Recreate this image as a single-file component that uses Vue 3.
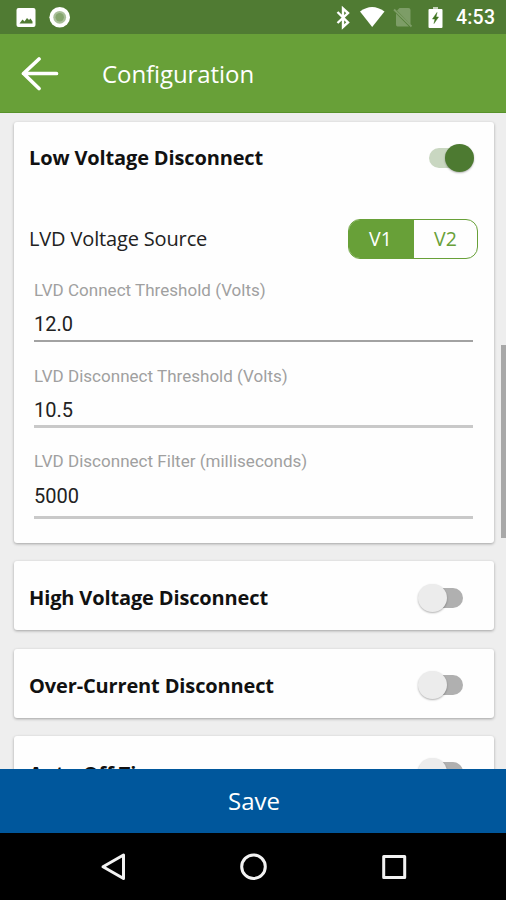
<script setup>
import { ref } from 'vue'

const lowVoltage = ref(true)
const source = ref('V1')
const fields = ref([
  { label: 'LVD Connect Threshold (Volts)', value: '12.0', key: 'connect' },
  { label: 'LVD Disconnect Threshold (Volts)', value: '10.5', key: 'disconnect' },
  { label: 'LVD Disconnect Filter (milliseconds)', value: '5000', key: 'filter' },
])
const sections = ref([
  { title: 'High Voltage Disconnect', key: 'high', on: false },
  { title: 'Over-Current Disconnect', key: 'over', on: false },
  { title: 'Auto-Off Timer', key: 'auto', on: false },
])
</script>

<template>
  <div class="screen">
    <div class="status">
      <svg class="status-left" width="60" height="34" viewBox="0 0 60 34">
        <path fill="#fff" fill-rule="evenodd" d="M3.500 8h15q2 0 2 2v15q0 2-2 2h-15q-2 0-2-2V10q0-2 2-2zM4.500 23.500h13v-2l-2-3-1.500 1.500-2-2-2.500 3.500-2-2z" />
        <circle cx="44.700" cy="17.300" r="10.300" fill="#fff" />
        <circle cx="44.700" cy="17.300" r="6.400" fill="#a9bf99" />
        <circle cx="44.700" cy="17.300" r="4.200" fill="#86a66f" />
      </svg>
      <svg class="status-right" width="112" height="34" viewBox="0 0 112 34">
        <path d="M1.500 12l10.500 10.500-5 4.500V8.500L12 13 1.500 23" fill="none" stroke="#fff" stroke-width="2.400" />
        <path d="M24 11.500Q36 2.500 48.500 11.500L36.200 27z" fill="#fff" />
        <path d="M63.500 8h9q2 0 2 2v14.500L61 10.500zM60 13.500L73 26.500H61.500q-1.500 0-1.500-2z" fill="#7d9d67" />
        <path d="M58 9.500l17.500 17" stroke="#7d9d67" stroke-width="1.800" />
        <path d="M97 7h5v2h-5z" fill="#c5d3bb" />
        <path d="M93.500 9h12q1 0 1 1v17q0 1-1 1h-12q-1 0-1-1V10q0-1 1-1z" fill="#fff" />
        <path d="M101 12.500l-4.500 6.500h2.500l-1 4.500 4.500-6.500h-2.500z" fill="#3f7420" stroke="#3f7420" stroke-width="0.500" />
      </svg>
      <span class="clock">4:53</span>
    </div>

    <header class="appbar">
      <svg width="40" height="36" viewBox="0 0 40 36" fill="none" stroke="#fff" stroke-width="3.700" stroke-linecap="round" stroke-linejoin="round">
        <path d="M19 4L3.500 18.500l15.500 15M3.500 18.500h33" />
      </svg>
      <h1>Configuration</h1>
    </header>

    <main class="content">
      <section class="card main-card">
        <div class="row">
          <h2 class="low">Low Voltage Disconnect</h2>
          <button class="switch" :class="{ on: lowVoltage }" @click="lowVoltage = !lowVoltage"></button>
        </div>
        <div class="source-row">
          <span class="source-label">LVD Voltage Source</span>
          <div class="segments">
            <button v-for="s in ['V1', 'V2']" :key="s" :class="{ active: source === s }" @click="source = s">{{ s }}</button>
          </div>
        </div>
        <div v-for="f in fields" :key="f.key" class="field" :class="f.key">
          <label :for="f.key">{{ f.label }}</label>
          <input :id="f.key" v-model="f.value" />
        </div>
      </section>
      <section v-for="s in sections" :key="s.key" class="card">
        <div class="row">
          <h2 :class="s.key">{{ s.title }}</h2>
          <button class="switch" :class="{ on: s.on }" @click="s.on = !s.on"></button>
        </div>
      </section>
      <div class="scrollbar"></div>
    </main>

    <button class="save">Save</button>
    <nav class="nav">
      <svg width="506" height="67" viewBox="0 0 506 67" fill="none" stroke="#f2f2f2" stroke-width="3" stroke-linejoin="round">
        <path d="M123.500 22v23.500L103 33.700z" />
        <circle cx="253.500" cy="33.700" r="11.800" />
        <rect x="383.700" y="23.500" width="21" height="21" />
      </svg>
    </nav>
  </div>
</template>

<style>
body {
  margin: 0;
  overflow: hidden;
}
</style>

<style scoped>
* {
  box-sizing: border-box;
}
button, input {
  font: inherit;
  border: 0;
  padding: 0;
  margin: 0;
  background: none;
}
.screen {
  width: 506px;
  height: 900px;
  display: flex;
  flex-direction: column;
  overflow: hidden;
  background: #eee;
  font-family: "Open Sans", sans-serif;
}
.status {
  height: 34px;
  flex: none;
  display: flex;
  align-items: center;
  padding: 0 11px 0 15px;
  background: #507b33;
}
.status-right {
  margin-left: auto;
}
.clock {
  width: 39px;
  margin-left: 8px;
  padding-top: 2px;
  color: #fff;
  font: 500 19.500px/22px Roboto, sans-serif;
  letter-spacing: 0.200px;
  white-space: nowrap;
}
.appbar {
  height: 79px;
  flex: none;
  display: flex;
  align-items: center;
  padding-left: 20px;
  background: #68a038;
  border-bottom: 1px solid #57922a;
}
h1 {
  margin: 1px 0 0 42px;
  color: #fff;
  font-size: 24px;
  font-weight: 400;
  line-height: 32px;
  letter-spacing: -0.080px;
}
.content {
  position: relative;
  height: 655.500px;
  flex: none;
  overflow: hidden;
  padding: 9px 12px 0 14px;
  display: flex;
  flex-direction: column;
  gap: 18.300px;
}
.card {
  flex: none;
  height: 69px;
  background: #fefefe;
  border-radius: 3px;
  box-shadow: 0 1px 3px rgba(0, 0, 0, 0.32);
}
.main-card {
  height: 421px;
}
.row {
  height: 72px;
  display: flex;
  align-items: center;
  justify-content: space-between;
  padding: 0 20px 0 15px;
}
.card:not(.main-card) .row {
  height: 73px;
  padding-right: 30px;
}
h2 {
  margin: 0;
  color: #111;
  font-size: 20px;
  font-weight: 700;
  line-height: 28px;
  letter-spacing: -0.140px;
  white-space: nowrap;
}
h2.over {
  margin-top: 1px;
}
h2.auto {
  margin-top: 4px;
}
.switch {
  width: 46px;
  height: 28px;
  display: flex;
  align-items: center;
}
.switch::before {
  content: "";
  width: 29px;
  height: 28px;
  flex: none;
  border-radius: 50%;
  background: #ececec;
  box-shadow: 0 1px 2px rgba(0, 0, 0, 0.3);
  z-index: 1;
}
.switch::after {
  content: "";
  width: 34px;
  height: 20px;
  flex: none;
  margin-left: -18px;
  border-radius: 10px;
  background: #b0b0b0;
}
.switch.on {
  flex-direction: row-reverse;
}
.switch.on::before {
  background: #4d7a31;
}
.switch.on::after {
  margin: 0 -18px 0 0;
  background: #c9d7c1;
}
.source-row {
  height: 41px;
  margin-top: 24px;
  margin-bottom: 1px;
  padding: 0 16px 0 15px;
  display: flex;
  align-items: center;
  justify-content: space-between;
}
.source-label {
  color: #222;
  font-size: 20px;
  line-height: 28px;
  letter-spacing: -0.150px;
}
.segments {
  width: 130px;
  height: 40px;
  display: flex;
  overflow: hidden;
  border: 1.500px solid #68a038;
  border-radius: 12px;
}
.segments button {
  flex: 1;
  color: #68a038;
  font-size: 19.500px;
}
.segments button:first-child {
  flex: 0 0 65px;
  padding-right: 2px;
}
.segments .active {
  color: #fff;
  background: #68a038;
}
.field {
  height: 85.500px;
  margin: 0 21px 0 20px;
  padding-top: 19px;
}
label {
  display: block;
  height: 22px;
  color: #a0a0a0;
  font: 17px/22px Roboto, sans-serif;
  letter-spacing: 0.020px;
  white-space: nowrap;
}
input {
  display: block;
  width: 100%;
  height: 41px;
  padding-top: 7px;
  color: #222;
  font: 20px/24px Roboto, sans-serif;
  border-bottom: 2px solid #a2a2a2;
  outline: none;
}
.disconnect input,
.filter input {
  border-bottom: 3px solid #c9c9c9;
}
.disconnect input {
  padding-top: 8px;
}
.filter input {
  height: 47px;
  padding: 8px 0 5px;
}
.scrollbar {
  position: absolute;
  top: 232px;
  right: 0;
  width: 5px;
  height: 193px;
  background: #a8a8a8;
}
.save {
  height: 64.500px;
  flex: none;
  padding-left: 2px;
  color: #fff;
  background: #00579c;
  font-size: 24px;
}
.nav {
  height: 67px;
  flex: none;
  background: #000;
}
.nav svg {
  display: block;
}
</style>
